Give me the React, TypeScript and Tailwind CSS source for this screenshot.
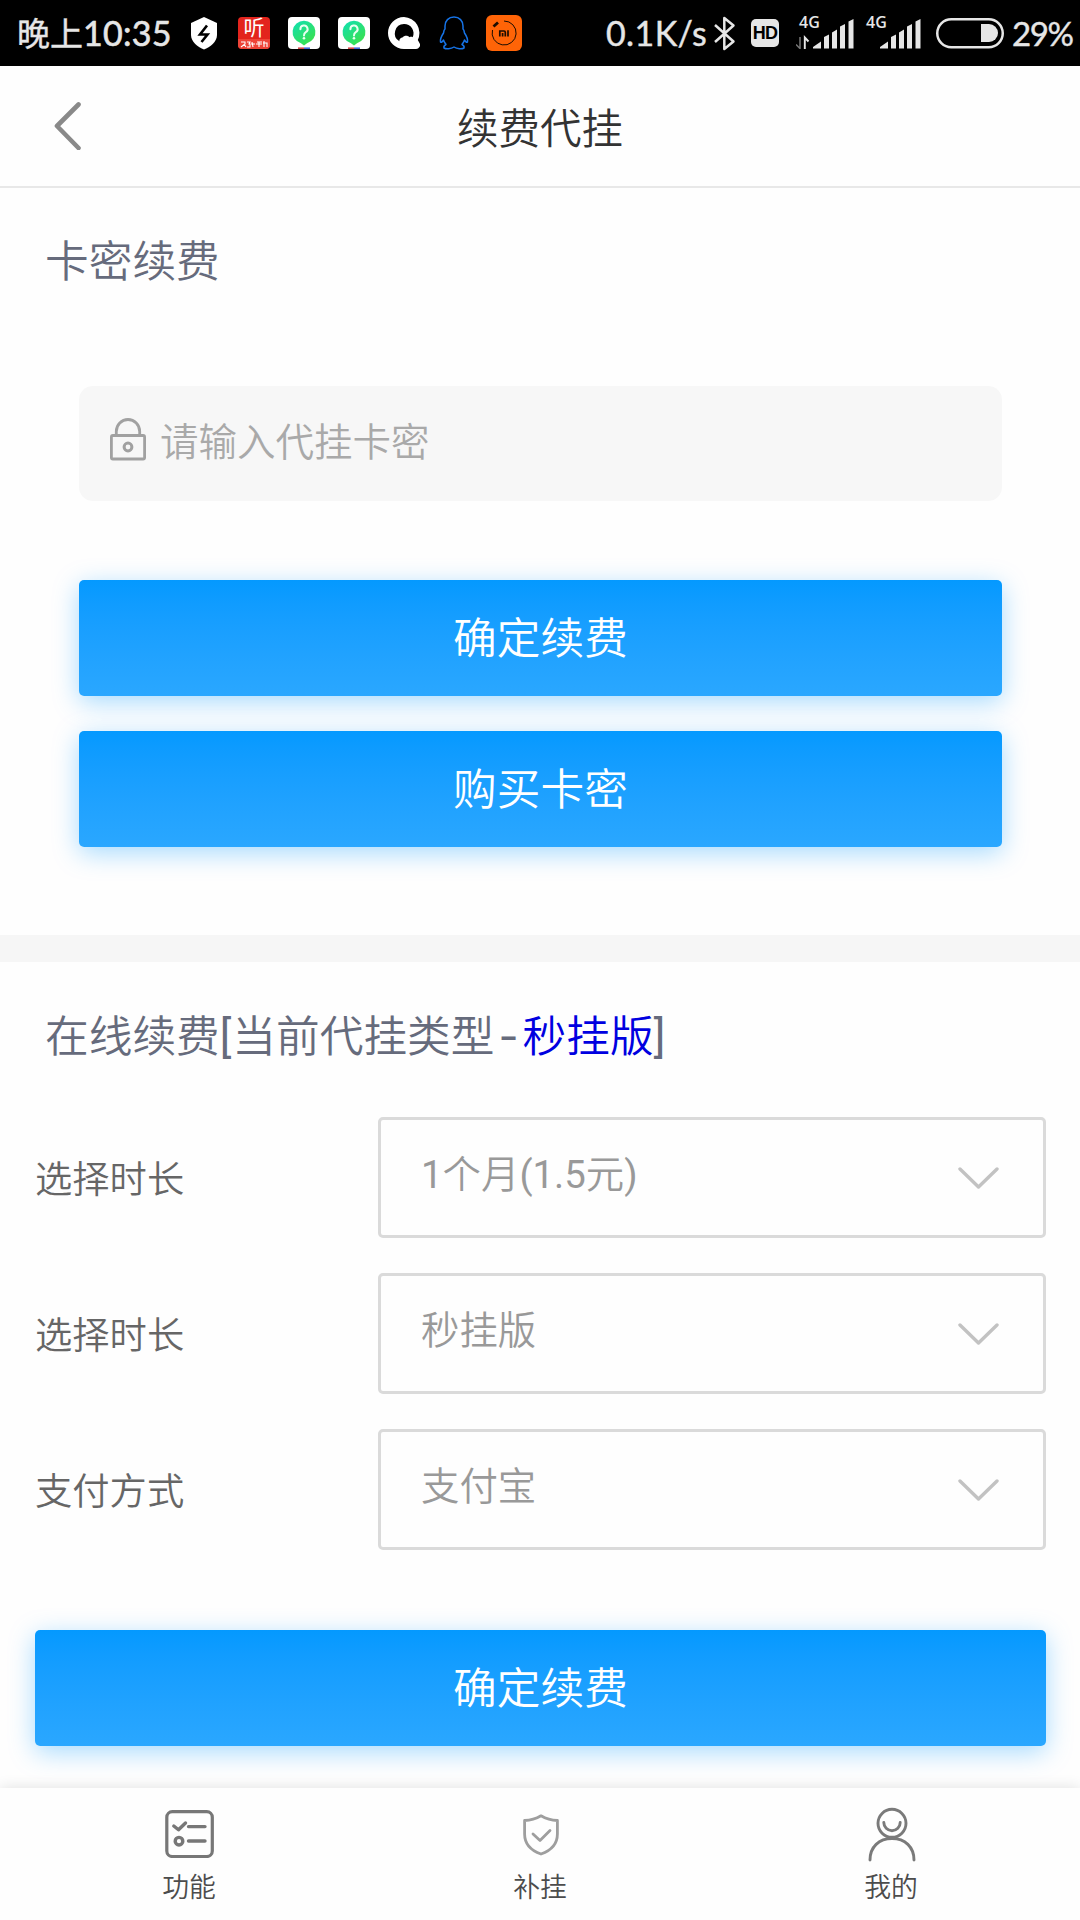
import React from "react";

function ShieldBolt() {
  return (
    <svg className="ml-[20px] h-[33px] w-[28px] shrink-0" viewBox="0 0 28 33">
      <path d="M14 0 L27 6 V18 C27 25 20 30 14 32.5 C8 30 1 25 1 18 V6 Z" fill="#fff" />
      <path d="M17 8.5 L10 17.5 H17.5 L11.5 25" fill="none" stroke="#000" strokeWidth="2.6" />
    </svg>
  );
}

function ListenApp() {
  return (
    <div className="ml-[20px] flex h-8 w-8 shrink-0 flex-col items-center rounded-[4px] bg-[#e3241d]">
      <span className="h-[22px] text-[21px] font-normal leading-[22px] text-white">听</span>
      <svg className="h-[10px] w-8 rounded-b-[4px]" viewBox="0 0 32 10">
        <rect width="32" height="10" fill="#ee4438" />
        <path d="M3 3h4v2L3 8M6 5l2 3M9 3h3l-1 2h1v3H9M14 3l1 5M13 5h4M19 3h5M18 5h6M21 3v5M26 2v6M25 4h4v4" fill="none" stroke="#fff" strokeWidth="1.1" />
      </svg>
    </div>
  );
}

function QuestionApp() {
  return (
    <svg className="ml-[18px] h-8 w-8 shrink-0" viewBox="0 0 32 32">
      <defs>
        <linearGradient id="pin" x1="0" y1="0" x2="0.7" y2="1">
          <stop offset="0" stopColor="#0fe0b4" />
          <stop offset="1" stopColor="#3be04c" />
        </linearGradient>
      </defs>
      <rect width="32" height="32" rx="4" fill="#fff" />
      <path d="M16 3.8a11.4 11.4 0 0 1 3 22.4L16 28.5 13 26.2a11.4 11.4 0 0 1 3-22.4Z" fill="url(#pin)" />
      <path d="M12.4 12.2a3.6 3.600 0 1 1 5.400 3c-1.400.9-1.800 1.500-1.800 3.200" fill="none" stroke="#eafff2" strokeWidth="2" strokeLinecap="round" />
      <circle cx="16" cy="21.300" r="1.300" fill="#eafff2" />
      <rect x="10" y="30.4" width="6" height="1.6" fill="#d84b4b" />
      <rect x="16" y="30.4" width="6" height="1.6" fill="#4468d8" />
    </svg>
  );
}

function BrowserApp() {
  return (
    <svg className="ml-[18px] h-8 w-8 shrink-0" viewBox="0 0 32 32">
      <path d="M16 0a16 16 0 1 0 0 32H28a4 4 0 0 0 3.6-5.8L29.8 23A16 16 0 0 0 16 0Z" fill="#fff" />
      <path d="M16 7a9.3 9.3 0 0 0-4.6 17.3C11 21.500 13.400 20.600 14.500 20.400C16 18.200 20 18 21.500 20.200C23 19.600 24 19.900 24.700 20.200A9.300 9.300 0 0 0 16 7Z" fill="#000" />
    </svg>
  );
}

function Penguin() {
  return (
    <svg className="ml-[19px] h-[34px] w-[30px] shrink-0" viewBox="0 0 30 34">
      <path
        d="M15 1C9.500 1 6 5 6 10V13C4.300 14.500 5 16 4.500 17C2.500 20 1 23 1.500 26C2.500 27 3.500 25.500 4.500 24C5 26 6 27 7 28.500C5 29.500 4.500 30.500 5 32C7 33.300 12 33 15 31C18 33 23 33.300 25 32C25.500 30.500 25 29.500 23 28.500C24 27 25 26 25.500 24C26.500 25.500 27.500 27 28.500 26C29 23 27.500 20 25.500 17C25 16 25.700 14.500 24 13V10C24 5 20.500 1 15 1Z"
        fill="none"
        stroke="#1673e6"
        strokeWidth="1.5"
        strokeLinejoin="round"
      />
    </svg>
  );
}

function MiApp() {
  return (
    <svg className="ml-[17px] h-9 w-9 shrink-0" viewBox="0 0 36 36">
      <rect width="36" height="36" rx="6" fill="#ff6407" />
      <path d="M18 6A12 12 0 1 1 6.500 15" fill="none" stroke="#1c0d02" strokeWidth="1" />
      <path d="M7.500 11.500L12 7.500" stroke="#1c0d02" strokeWidth="2.800" />
      <path d="M13.800 21.500V16H18Q19.300 16 19.300 17.500V21.500M16.600 18V21.500M22 15.200V21.500" fill="none" stroke="#1c0d02" strokeWidth="1.700" />
    </svg>
  );
}

function Bluetooth() {
  return (
    <svg className="h-[35px] w-[22px] shrink-0" viewBox="0 0 22 35">
      <path d="M1 9L19.500 25.500L10.300 33V2L19.500 9.500L1 26" fill="none" stroke="#e6e6e6" strokeWidth="2.500" strokeLinejoin="round" />
    </svg>
  );
}

function Signal({ arrows }: { arrows?: boolean }) {
  return (
    <div className="relative h-[31px] w-[58px] shrink-0">
      <span className="absolute left-[3px] top-[-4px] font-['Open_Sans'] text-[16px] font-semibold leading-[16px] text-[#e6e6e6]">4G</span>
      <svg className="h-[31px] w-[58px]" viewBox="0 0 58 31">
        {arrows && (
          <>
            <path d="M4 19V30.500L0 26.500" fill="none" stroke="#777" strokeWidth="1.500" />
            <path d="M8.800 31V19.500L12.500 23.500" fill="none" stroke="#e6e6e6" strokeWidth="1.900" />
          </>
        )}
        <path d="M17 30.500V29L25 23.500V30.500ZM28 30.500V19L33 16.500V30.500ZM36 30.500V14.500L41 11.500V30.500ZM44 30.500V8.500L49 6V30.500ZM52.500 30.500V3.500L57.500 1V30.500Z" fill="#e6e6e6" />
      </svg>
    </div>
  );
}

function Battery() {
  return (
    <svg className="ml-[15px] h-[31px] w-[68px] shrink-0" viewBox="0 0 68 31">
      <rect x="1.250" y="1.250" width="65.500" height="28" rx="14" fill="none" stroke="#e6e6e6" strokeWidth="2.500" />
      <path d="M45 6H53A9 9 0 0 1 53 24H45Z" fill="#e6e6e6" />
    </svg>
  );
}

function StatusBar() {
  return (
    <div className="flex h-[66px] items-center bg-black pl-[17px] font-normal text-[#e6e6e6]">
      <div className="flex w-[153px] shrink-0 items-center whitespace-nowrap leading-none">
        <span className="w-[67px] pt-[2px] text-[33px] [-webkit-text-stroke:0.4px_#e6e6e6]">晚上</span>
        <span className="font-['Lato'] text-[34px] tracking-[0.3px] [-webkit-text-stroke:0.6px_#e6e6e6]">10:35</span>
      </div>
      <ShieldBolt />
      <ListenApp />
      <QuestionApp />
      <QuestionApp />
      <BrowserApp />
      <Penguin />
      <MiApp />
      <span className="ml-[84px] w-[108px] shrink-0 whitespace-nowrap font-['Lato'] text-[34px] leading-none tracking-[0.4px] [-webkit-text-stroke:0.4px_#e6e6e6]">0.1K/s</span>
      <Bluetooth />
      <span className="ml-[15px] mr-[17px] flex h-7 w-7 shrink-0 items-center justify-center rounded-[5px] bg-[#e6e6e6] font-['Liberation_Sans'] text-[18px] font-bold leading-none tracking-[-0.8px] text-black">HD</span>
      <Signal arrows />
      <div className="w-[9px] shrink-0" />
      <Signal />
      <Battery />
      <span className="ml-[8px] whitespace-nowrap font-['Lato'] text-[33px] leading-none tracking-[-1.4px] [-webkit-text-stroke:0.4px_#e6e6e6]">29%</span>
    </div>
  );
}

function PrimaryButton({ children }: { children: React.ReactNode }) {
  return (
    <button className="flex h-[116px] w-full items-center justify-center rounded-[5px] bg-linear-to-b from-[#0499ff] to-[#2aa7ff] pt-[3px] text-[43.700px] leading-none text-white shadow-[0_6px_26px_rgba(0,153,255,0.35)]">
      {children}
    </button>
  );
}

function SelectRow({ label, value }: { label: string; value: React.ReactNode }) {
  return (
    <div className="flex h-[121px] items-center">
      <span className="w-[343px] shrink-0 pt-[6px] text-[37.300px] leading-none text-[#666]">{label}</span>
      <div className="flex h-[121px] flex-1 items-center justify-between rounded-[5px] border-[3px] border-[#dadada] pl-10 pr-[44px]">
        <span className="mb-[4px] text-[38.400px] leading-none text-[#999]">{value}</span>
        <svg className="mt-[1px] h-[22px] w-[41px]" viewBox="0 0 41 22">
          <path d="M2 2L20.500 20L39 2" fill="none" stroke="#c2c2c2" strokeWidth="3.400" strokeLinecap="round" strokeLinejoin="round" />
        </svg>
      </div>
    </div>
  );
}

function ListIcon() {
  return (
    <svg className="h-[48px] w-[49px]" viewBox="0 0 49 48" fill="none" stroke="#777" strokeLinecap="round" strokeLinejoin="round">
      <rect x="1.800" y="1.700" width="45.500" height="44.800" rx="5.500" strokeWidth="3.200" />
      <path d="M8.800 16L13.500 19.800L20.500 13" strokeWidth="3.400" />
      <path d="M23.500 16.600H40M23.500 31H40" strokeWidth="3.400" />
      <circle cx="14" cy="31.200" r="3.800" strokeWidth="3.400" />
    </svg>
  );
}

function ShieldIcon() {
  return (
    <svg className="ml-[1px] mt-[1px] h-[42px] w-[36px]" viewBox="0 0 36 42" fill="none" stroke="#9e9e9e" strokeWidth="2.800" strokeLinejoin="round">
      <path d="M18 1.800Q10.500 6.300 1.600 6.500V20C1.600 30 8 36.500 18 40C28 36.500 34.400 30 34.400 20V6.500Q25.500 6.300 18 1.800Z" />
      <path d="M10 20L17 26.500L27 16.500" strokeLinecap="round" />
    </svg>
  );
}

function UserIcon() {
  return (
    <svg className="ml-[1px] h-[55px] w-[48px]" viewBox="0 0 48 55" fill="none" stroke="#7a7a7a" strokeWidth="2.900" strokeLinecap="round">
      <circle cx="24" cy="16.300" r="14" />
      <path d="M15.800 15.500A8.200 8.200 0 0 0 32.200 15.500" />
      <path d="M2 53C2 40 11 31.500 24 31.500S46 40 46 53" />
    </svg>
  );
}

function Tab({ label, icon }: { label: string; icon: React.ReactNode }) {
  return (
    <div className="flex w-[351px] flex-col items-center">
      <div className="mt-[15px] flex h-[62px] items-center justify-center">{icon}</div>
      <span className="mt-[10px] text-[26.800px] leading-none text-[#4c4c4c]">{label}</span>
    </div>
  );
}

export default function App() {
  return (
    <div className="flex h-[1920px] w-[1080px] flex-col overflow-hidden bg-[#fefefe] font-['Roboto','Noto_Sans_CJK_SC',sans-serif] font-[350]">
      <StatusBar />
      <header className="grid h-[122px] grid-cols-3 items-center border-b-2 border-[#e8e8e8] bg-[#fefefe]">
        <svg className="ml-[54px] h-[48px] w-[28px]" viewBox="0 0 28 48">
          <path d="M24.500 2.500L3 24L24.500 46" fill="none" stroke="#898989" strokeWidth="4.600" strokeLinecap="round" strokeLinejoin="round" />
        </svg>
        <h1 className="pt-[8px] text-center text-[41.500px] leading-none text-[#333]">续费代挂</h1>
      </header>

      <section className="h-[747px] shrink-0">
        <h2 className="ml-[45px] h-[95px] pt-[53px] text-[43.700px] leading-none text-[#666b7c]">卡密续费</h2>
        <div className="mx-[79px] mr-[78px] mt-[103px]">
          <div className="flex h-[115px] items-center rounded-[14px] bg-[#f7f7f7] pl-[31px]">
            <svg className="mb-[10px] h-[44px] w-[36px]" viewBox="0 0 36 44" fill="none" stroke="#a1a1a1" strokeWidth="2.800">
              <rect x="1.400" y="18.500" width="33.200" height="23.500" rx="1.500" />
              <path d="M6.300 18V14.500A11.700 12 0 0 1 29.700 14.500V18" />
              <circle cx="18" cy="30" r="3.900" strokeWidth="3" />
            </svg>
            <span className="ml-[14px] text-[38.500px] leading-none text-[#a9a9a9]">请输入代挂卡密</span>
          </div>
          <div className="mt-[79px] flex flex-col gap-[35px]">
            <PrimaryButton>确定续费</PrimaryButton>
            <PrimaryButton>购买卡密</PrimaryButton>
          </div>
        </div>
      </section>

      <div className="h-[27px] shrink-0 bg-[#f6f6f6]" />

      <section className="flex-1 pl-[35px] pr-[34px]">
        <h2 className="ml-[10px] h-[95px] whitespace-nowrap pt-[53px] text-[43.700px] leading-none text-[#666b7c]">
          在线续费<span className="pr-[1px] font-normal">[</span>当前代挂类型<span className="px-[4px] font-['Inter'] font-normal">-</span>
          <span className="text-[#0000e0]">秒挂版</span><span className="font-normal">]</span>
        </h2>
        <div className="mt-[60px] flex flex-col gap-[35px]">
          <SelectRow
            label="选择时长"
            value={
              <>
                <span className="font-normal">1</span>个月<span className="font-normal">(1.5</span>元<span className="font-normal">)</span>
              </>
            }
          />
          <SelectRow label="选择时长" value="秒挂版" />
          <SelectRow label="支付方式" value="支付宝" />
        </div>
        <div className="mt-[80px]">
          <PrimaryButton>确定续费</PrimaryButton>
        </div>
      </section>

      <nav className="relative flex h-[132px] shrink-0 justify-center bg-[#fefefe] shadow-[0_0_14px_rgba(0,0,0,0.12)]">
        <Tab label="功能" icon={<ListIcon />} />
        <Tab label="补挂" icon={<ShieldIcon />} />
        <Tab label="我的" icon={<UserIcon />} />
      </nav>
    </div>
  );
}
